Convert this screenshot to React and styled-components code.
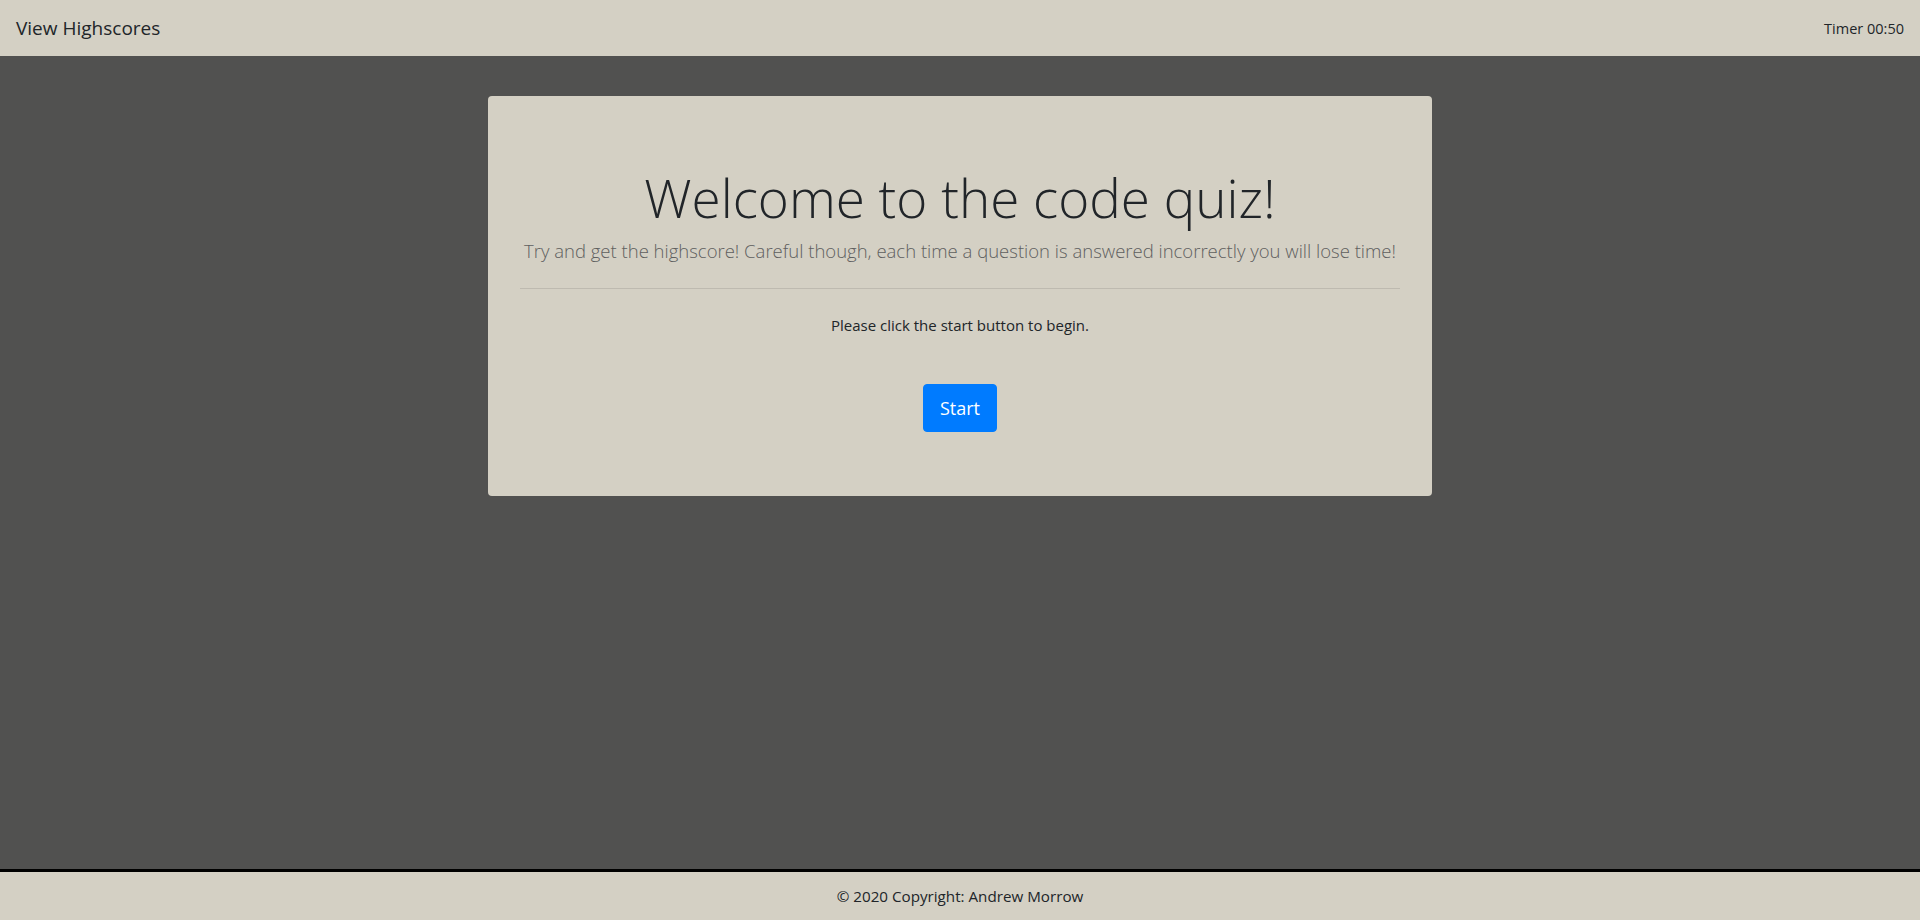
import React from "react";
import styled, { createGlobalStyle } from "styled-components";

const GlobalStyle = createGlobalStyle`
  html, body {
    margin: 0;
    padding: 0;
    height: 100%;
  }
  body {
    font-family: "Open Sans", "Noto Sans", sans-serif;
    background: #515150;
    color: #212529;
  }
  #root {
    min-height: 100%;
  }
`;

const Page = styled.div`
  min-height: 100vh;
  display: flex;
  flex-direction: column;
`;

const NavBar = styled.nav`
  height: 56px;
  background: #d4d0c4;
  display: flex;
  align-items: center;
  justify-content: space-between;
  padding: 0 16px;
  box-sizing: border-box;
`;

const Brand = styled.a`
  font-size: 19px;
  color: #212529;
  text-decoration: none;
  cursor: pointer;
`;

const Timer = styled.span`
  font-size: 14.5px;
  color: #212529;
`;

const Main = styled.main`
  flex: 1;
  display: flex;
  justify-content: center;
  align-items: flex-start;
  padding-top: 40px;
`;

const Jumbotron = styled.section`
  width: 944px;
  box-sizing: border-box;
  background: #d4d0c4;
  border-radius: 4px;
  padding: 64px 32px;
  text-align: center;
`;

const Title = styled.h1`
  margin: 6px 0 8px;
  font-size: 53px;
  font-weight: 300;
  line-height: 1.2;
`;

const Lead = styled.p`
  margin: 0;
  font-size: 18.5px;
  font-weight: 300;
  color: #5f5f5f;
  white-space: nowrap;
`;

const Divider = styled.hr`
  margin: 25px 0 26px;
  border: 0;
  border-top: 1px solid rgba(0, 0, 0, 0.1);
`;

const Note = styled.p`
  margin: 0 0 49px;
  font-size: 15px;
`;

const StartButton = styled.button`
  font-family: inherit;
  font-size: 18px;
  color: #fff;
  background: #007bff;
  border: 1px solid #007bff;
  border-radius: 4px;
  width: 74px;
  height: 48px;
  cursor: pointer;
`;

const Footer = styled.footer`
  border-top: 3px solid #000;
  background: #d4d0c4;
  height: 51px;
  box-sizing: border-box;
  display: flex;
  align-items: center;
  justify-content: center;
  font-size: 15.2px;
  color: #212529;
`;

const App = () => {
  return (
    <>
      <GlobalStyle />
      <Page>
        <NavBar>
          <Brand>View Highscores</Brand>
          <Timer>Timer 00:50</Timer>
        </NavBar>
        <Main>
          <Jumbotron>
            <Title>Welcome to the code quiz!</Title>
            <Lead>
              Try and get the highscore! Careful though, each time a question is
              answered incorrectly you will lose time!
            </Lead>
            <Divider />
            <Note>Please click the start button to begin.</Note>
            <StartButton>Start</StartButton>
          </Jumbotron>
        </Main>
        <Footer>© 2020 Copyright: Andrew Morrow</Footer>
      </Page>
    </>
  );
};

export default App;
